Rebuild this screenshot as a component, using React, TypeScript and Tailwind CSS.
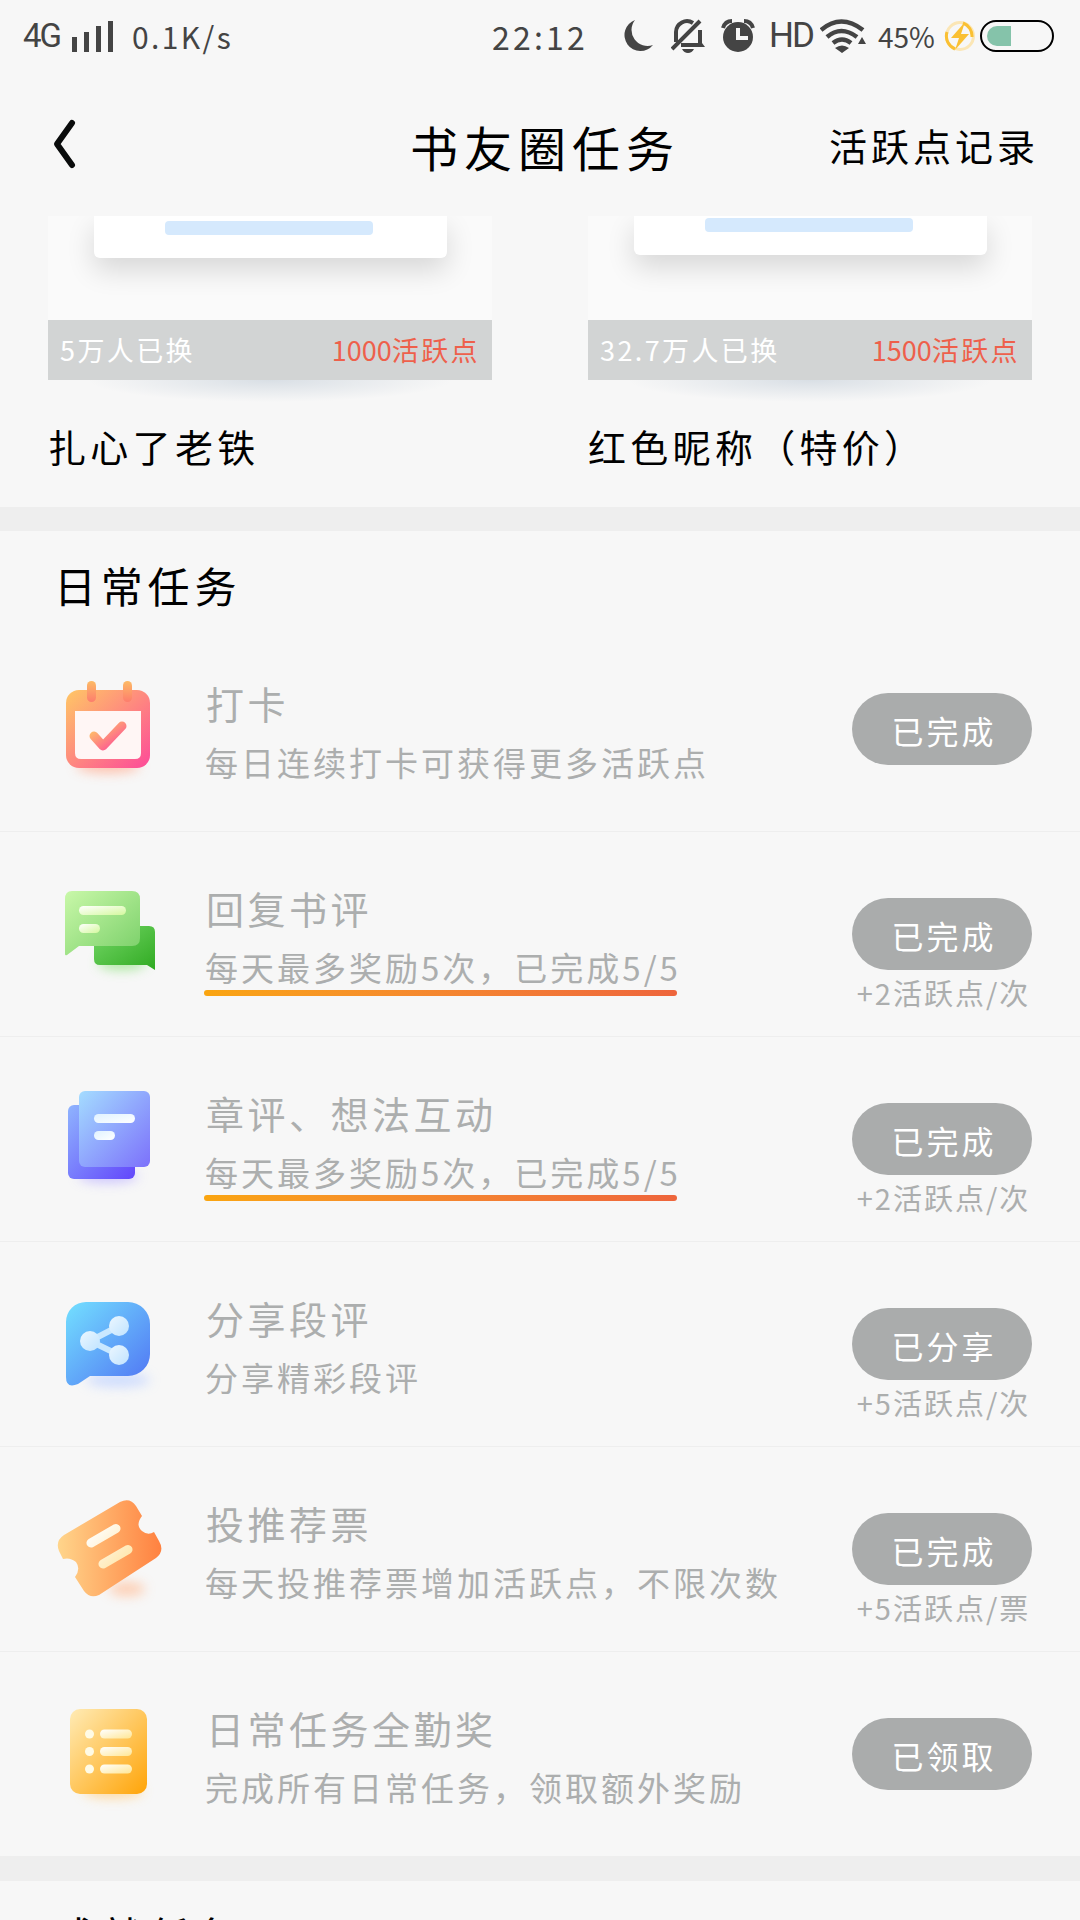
import type { ReactNode } from 'react';

const rewards = [
  { name: '扎心了老铁', exchanged: '5万人已换', price: 1000, previewClass: 'h-[42px]', lineClass: 'mt-[5px]' },
  { name: '红色昵称（特价）', exchanged: '32.7万人已换', price: 1500, previewClass: 'h-[39px]', lineClass: 'mt-[2px]' },
];

const tasks = [
  { title: '打卡', desc: '每日连续打卡可获得更多活跃点', action: '已完成', reward: '', underline: false, icon: <CalendarIcon /> },
  { title: '回复书评', desc: '每天最多奖励5次，已完成5/5', action: '已完成', reward: '+2活跃点/次', underline: true, icon: <ReplyIcon /> },
  { title: '章评、想法互动', desc: '每天最多奖励5次，已完成5/5', action: '已完成', reward: '+2活跃点/次', underline: true, icon: <NotesIcon /> },
  { title: '分享段评', desc: '分享精彩段评', action: '已分享', reward: '+5活跃点/次', underline: false, icon: <ShareIcon /> },
  { title: '投推荐票', desc: '每天投推荐票增加活跃点，不限次数', action: '已完成', reward: '+5活跃点/票', underline: false, icon: <TicketIcon /> },
  { title: '日常任务全勤奖', desc: '完成所有日常任务，领取额外奖励', action: '已领取', reward: '', underline: false, icon: <ListIcon /> },
];

export default function App() {
  return (
    <div className="h-[1920px] w-[1080px] overflow-hidden bg-[#f7f7f7] font-['Noto_Sans_CJK_SC',sans-serif] text-black">
      <StatusBar />

      <header className="grid h-[144px] grid-cols-[1fr_auto_1fr] items-center pr-[41px] pl-[51px]">
        <svg className="h-[52px] w-[26px]" viewBox="0 0 26 52" fill="none" stroke="#0a0c0c" strokeWidth="6" strokeLinecap="round" strokeLinejoin="round">
          <path d="M21 5 6 26l15 21" />
        </svg>
        <h1 className="pt-1 text-[48px] leading-none tracking-[6px]">书友圈任务</h1>
        <button className="pt-[2px] text-right text-[38px] leading-none tracking-[4px]">活跃点记录</button>
      </header>

      <section className="flex h-[291px] gap-24 px-12">
        {rewards.map((reward) => (
          <article key={reward.name} className="w-[444px]">
            <div className="flex h-[104px] justify-center overflow-hidden bg-[#fafafa]">
              <div className={`w-[353px] rounded-b-md bg-white shadow-[0_12px_28px_rgba(0,0,0,0.14)] ${reward.previewClass}`}>
                <div className={`ml-[71px] h-[14px] w-[208px] rounded-sm bg-[#d5e9fd] ${reward.lineClass}`} />
              </div>
            </div>
            <div className="flex h-[60px] items-center justify-between bg-[#d2d4d4] px-3 text-[27px] tracking-[2.4px]">
              <span className="text-white">{reward.exchanged}</span>
              <span className="text-[#ee604b]"><span className="tracking-normal">{reward.price}</span>活跃点</span>
            </div>
            <div className="mx-10 h-[22px] bg-radial-[50%_100%_at_50%_0%] from-[#d9dfe5] to-transparent" />
            <h2 className="mt-[22px] text-[38px] leading-[44px] tracking-[4.3px] whitespace-nowrap">{reward.name}</h2>
          </article>
        ))}
      </section>

      <div className="h-6 bg-[#eeeeee]" />

      <section>
        <h2 className="h-[95px] pt-[28px] pl-[54px] text-[42px] leading-[52px] tracking-[4.8px]">日常任务</h2>
        {tasks.map((task, index) => (
          <article key={task.title} className={`flex h-[205px] px-12 ${index > 0 ? 'shadow-[inset_0_1px_#eeeeee]' : ''}`}>
            <div className="mt-[46px] h-[120px] w-[120px]">{task.icon}</div>
            <div className="ml-9 flex-1 whitespace-nowrap text-[#acaeae]">
              <h3 className="mt-[53px] pl-[2px] text-[38px] leading-[48px] tracking-[3.5px]">{task.title}</h3>
              <p className="mt-[15px] pl-px text-[33px] leading-[40px] tracking-[3px]">{task.desc}</p>
              {task.underline && <div className="mt-[3px] h-[6px] w-[473px] rounded-full bg-linear-to-r from-[#faa510] to-[#ee653c]" />}
            </div>
            <div className="w-[180px] pt-[67px] text-center">
              <button className="block h-[72px] w-[180px] rounded-full bg-[#aaacac] pt-[2px] pl-1 text-[32px] tracking-[3px] text-white">{task.action}</button>
              <p className="mt-[4px] pl-[3px] text-[29px] leading-[36px] tracking-[2px] whitespace-nowrap text-[#acaeae]">{task.reward}</p>
            </div>
          </article>
        ))}
      </section>

      <div className="h-[25px] bg-[#eeeeee]" />
      <h2 className="pt-[28px] pl-[54px] text-[42px] leading-[52px] tracking-[4.8px]">成就任务</h2>
    </div>
  );
}

function StatusBar() {
  return (
    <div className="flex h-[72px] items-center pr-[24px] pl-[23px] text-[#444444]">
      <span className="w-[49px] shrink-0 font-['Roboto',sans-serif] text-[33px] tracking-[-2px]">4G</span>
      <svg className="h-[31px] w-[42px] shrink-0" viewBox="0 0 42 31" fill="currentColor">
        <path d="M0 16h5v15H0zM12 11h5v20h-5zM24 5h5v26h-5zM36 0h5v31h-5z" />
      </svg>
      <span className="ml-[18px] w-[360px] shrink-0 text-[30px] tracking-[2.4px]">0.1K/s</span>
      <span className="w-[131px] shrink-0 text-[32px] tracking-[3.2px]">22:12</span>

      <svg className="h-[34px] w-[32px] shrink-0" viewBox="0 0 32 34" fill="currentColor">
        <path d="M12 1a16 16 0 1 0 18 25A16 16 0 0 1 12 1z" />
      </svg>
      <svg className="ml-4 h-[34px] w-[34px] shrink-0" viewBox="0 0 34 34" fill="none" stroke="currentColor" strokeWidth="4">
        <path d="M5 23V13a11 11 0 0 1 17-9M1 30 29 2M29 11v14M10 26h20" />
        <path d="m27 13 1 7 6 8h-6zM11 30h12q-2 4-6 4t-6-4" fill="currentColor" stroke="none" />
      </svg>
      <svg className="ml-4 h-[34px] w-[34px] shrink-0" viewBox="0 0 34 34">
        <circle cx="17" cy="18" r="15" fill="currentColor" />
        <path d="M2 9q2-7 9-7M32 9q-2-7-9-7" stroke="currentColor" strokeWidth="4" fill="none" />
        <path d="M17 9v10h10" stroke="#f7f7f7" strokeWidth="4" fill="none" />
      </svg>
      <span className="ml-[14px] w-[51px] shrink-0 font-['Roboto',sans-serif] text-[35px] tracking-[-2px]">HD</span>
      <svg className="h-[34px] w-[46px] shrink-0" viewBox="0 0 46 34" fill="none" stroke="currentColor" strokeWidth="4.5">
        <path d="M1 11q20-17 42 0M7 18q14-12 30 0M13 24q9-7 18 0" />
        <path d="M15 29q7-5 14 0l-7 5zM38 25l4-7 4 7z" fill="currentColor" stroke="none" />
      </svg>
      <span className="ml-3 w-[66px] shrink-0 text-[28px]">45%</span>
      <svg className="h-[32px] w-[32px] shrink-0" viewBox="0 0 32 32" fill="none">
        <circle cx="16" cy="16" r="13.5" stroke="#fbe6b5" strokeWidth="3" />
        <path d="M11 29A14 14 0 0 1 3 12M19 3a14 14 0 0 1 9 14" stroke="#fac033" strokeWidth="3" />
        <path d="m21 2-14 16h8l-4 12 14-16h-8z" fill="#fac033" />
      </svg>
      <div className="ml-[4px] flex h-[32px] w-[74px] shrink-0 items-center rounded-full border-2 border-black pl-[5px]">
        <div className="h-[20px] w-[24px] rounded-l-full bg-[#85c3aa]" />
      </div>
    </div>
  );
}

function IconFrame({ children }: { children: ReactNode }) {
  return <svg className="h-[120px] w-[120px]" viewBox="0 0 120 120" fill="none">{children}</svg>;
}

function Gradient({ id, from, to }: { id: string; from: string; to: string }) {
  return (
    <linearGradient id={id} x1="0" y1="0" x2="1" y2="1">
      <stop stopColor={from} />
      <stop offset="1" stopColor={to} />
    </linearGradient>
  );
}

// Soft coloured glow under each icon
function Glow({ id, color, cx, cy, rx }: { id: string; color: string; cx: number; cy: number; rx: number }) {
  return (
    <>
      <filter id={id} x="-50%" y="-150%" width="200%" height="400%"><feGaussianBlur stdDeviation="6" /></filter>
      <ellipse cx={cx} cy={cy} rx={rx} ry="7" fill={color} opacity="0.8" filter={`url(#${id})`} />
    </>
  );
}

function CalendarIcon() {
  return (
    <IconFrame>
      <defs>
        <Gradient id="cal" from="#ffc765" to="#fd4a99" />
        <linearGradient id="calRing" x2="0" y2="1"><stop stopColor="#fdbb66" /><stop offset="1" stopColor="#fd7d6d" /></linearGradient>
      </defs>
      <Glow id="calGlow" color="#ffb49a" cx={60} cy={94} rx={32} />
      <rect x="18" y="18" width="84" height="78" rx="13" fill="url(#cal)" />
      <path d="M27 39h66v42q0 6-6 6H33q-6 0-6-6z" fill="#fff6f5" />
      <rect x="39" y="9" width="9" height="21" rx="4.5" fill="url(#calRing)" />
      <rect x="75" y="9" width="9" height="21" rx="4.5" fill="url(#calRing)" />
      <path d="m46 64 9 10 19-20" stroke="url(#cal)" strokeWidth="9" strokeLinecap="round" strokeLinejoin="round" />
    </IconFrame>
  );
}

function ReplyIcon() {
  return (
    <IconFrame>
      <defs>
        <Gradient id="replyFront" from="#c9f8a9" to="#79cf68" />
        <Gradient id="replyBack" from="#75d767" to="#30aa22" />
        <Gradient id="replyLine" from="#ffffff" to="#d4f89d" />
      </defs>
      <Glow id="replyGlow" color="#9be48d" cx={74} cy={86} rx={24} />
      <path d="M52 49h49q6 0 6 6v38l-8-5H52q-6 0-6-6V55q0-6 6-6z" fill="url(#replyBack)" />
      <path d="M24 14h60q8 0 8 8v39q0 8-8 8H31l-12 9q-2 1-2-1V22q0-8 7-8z" fill="url(#replyFront)" />
      <rect x="31" y="29" width="47" height="9" rx="4.5" fill="url(#replyLine)" />
      <rect x="31" y="47" width="21" height="9" rx="4.5" fill="url(#replyLine)" />
    </IconFrame>
  );
}

function NotesIcon() {
  return (
    <IconFrame>
      <defs>
        <Gradient id="noteFront" from="#a4dcff" to="#7c71fb" />
        <Gradient id="noteBack" from="#8fb4fe" to="#6246fb" />
        <Gradient id="noteLine" from="#e0f2ff" to="#ffffff" />
      </defs>
      <Glow id="noteGlow" color="#c2b9ff" cx={60} cy={94} rx={30} />
      <rect x="20" y="23" width="67" height="74" rx="6" fill="url(#noteBack)" />
      <rect x="31" y="9" width="71" height="76" rx="6" fill="url(#noteFront)" />
      <rect x="46" y="32" width="41" height="9" rx="4.5" fill="url(#noteLine)" />
      <rect x="46" y="49" width="21" height="9" rx="4.5" fill="url(#noteLine)" />
    </IconFrame>
  );
}

function ShareIcon() {
  return (
    <IconFrame>
      <defs>
        <Gradient id="share" from="#73e0ff" to="#5073f3" />
        <Gradient id="shareDots" from="#ecf7ff" to="#c0e3ff" />
      </defs>
      <Glow id="shareGlow" color="#c3d5ff" cx={70} cy={93} rx={32} />
      <path d="M38 15h42a22 22 0 0 1 22 22v30a22 22 0 0 1-22 22H42l-12 8q-12 5-12-7V35a20 20 0 0 1 20-20z" fill="url(#share)" />
      <path d="M71 39 42 54l29 14" stroke="#c9e8ff" strokeWidth="6" />
      <circle cx="42" cy="54" r="10" fill="url(#shareDots)" />
      <circle cx="71" cy="39" r="10" fill="url(#shareDots)" />
      <circle cx="71" cy="68" r="10" fill="url(#shareDots)" />
    </IconFrame>
  );
}

function TicketIcon() {
  return (
    <IconFrame>
      <defs>
        <linearGradient id="ticket"><stop stopColor="#ffd58b" /><stop offset="1" stopColor="#ff8140" /></linearGradient>
        <Gradient id="ticketLine" from="#ffffff" to="#ffe5a7" />
      </defs>
      <Glow id="ticketGlow" color="#ffc5a3" cx={79} cy={97} rx={18} />
      <g transform="translate(0 -3)">
        <path d="M16 46 72 13q10-5 16 4l6 10q-7 9 0 15 6 5 12 1l5 9q6 10-3 17L51 106q-9 4-15-4l-9-14q6-8 1-15-6-5-13-3l-4-8q-4-10 5-16z" fill="url(#ticket)" />
        <path d="m43 54 25-14.500M55 75l25-14.500" stroke="url(#ticketLine)" strokeWidth="9" strokeLinecap="round" />
      </g>
    </IconFrame>
  );
}

function ListIcon() {
  return (
    <IconFrame>
      <defs>
        <Gradient id="list" from="#ffebb5" to="#ffa408" />
        <Gradient id="listLine" from="#ffffff" to="#ffe694" />
      </defs>
      <Glow id="listGlow" color="#ffd28c" cx={65} cy={94} rx={30} />
      <rect x="22" y="12" width="77" height="85" rx="10" fill="url(#list)" />
      {[37, 54.5, 72].map((y) => (
        <g key={y}>
          <circle cx="41.5" cy={y} r="4.5" fill="#fffbe6" />
          <rect x="52" y={y - 4.5} width="32" height="9" rx="4.5" fill="url(#listLine)" />
        </g>
      ))}
    </IconFrame>
  );
}
